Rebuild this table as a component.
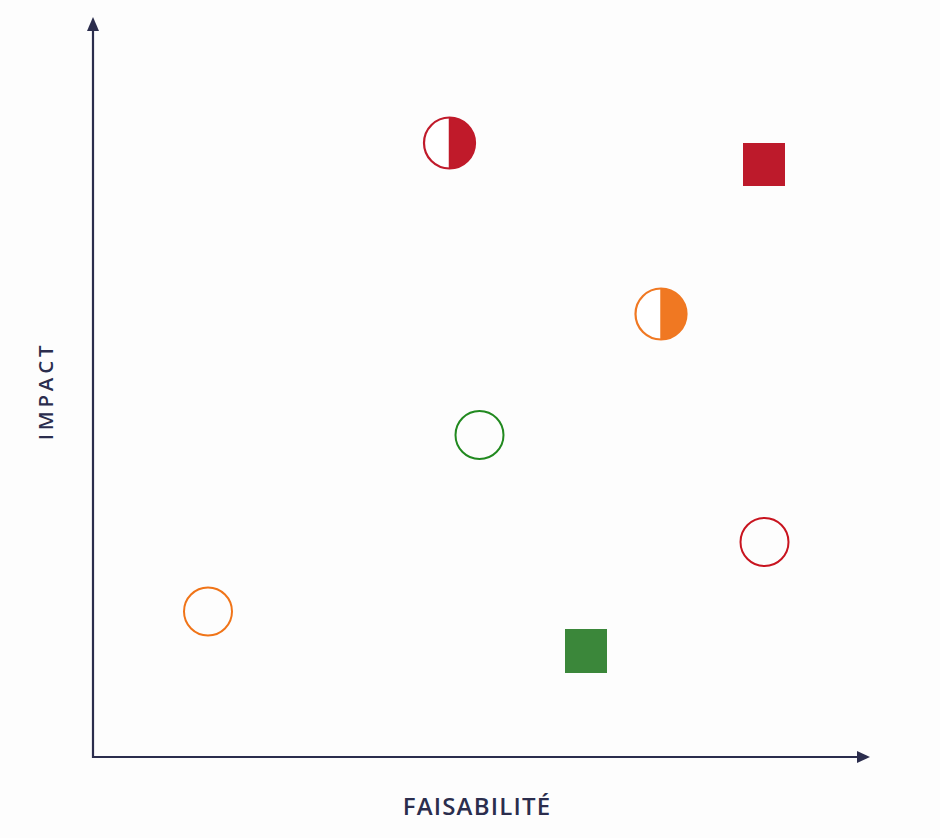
const AXIS = "#2b2d4d";

type Mark =
  | { kind: "circle"; cx: number; cy: number; r: number; color: string }
  | { kind: "half"; cx: number; cy: number; r: number; color: string }
  | { kind: "square"; x: number; y: number; w: number; h: number; color: string };

const marks: Mark[] = [
  { kind: "half", cx: 449.5, cy: 143, r: 25.5, color: "#c01a2a" },
  { kind: "square", x: 743, y: 143, w: 42, h: 43, color: "#bd1a2b" },
  { kind: "half", cx: 661, cy: 314, r: 25.5, color: "#f07822" },
  { kind: "circle", cx: 479.5, cy: 435, r: 24, color: "#21891f" },
  { kind: "circle", cx: 764.5, cy: 542, r: 24, color: "#c8141f" },
  { kind: "circle", cx: 208, cy: 611.5, r: 24, color: "#f07418" },
  { kind: "square", x: 565, y: 629, w: 42, h: 44, color: "#3b873a" },
];

function Marker({ m }: { m: Mark }) {
  if (m.kind === "square") {
    return <rect x={m.x} y={m.y} width={m.w} height={m.h} fill={m.color} />;
  }
  if (m.kind === "half") {
    return (
      <g>
        <circle cx={m.cx} cy={m.cy} r={m.r} fill="#fff" />
        <path
          d={`M ${m.cx} ${m.cy - m.r} A ${m.r} ${m.r} 0 0 1 ${m.cx} ${m.cy + m.r} Z`}
          fill={m.color}
        />
        <line x1={m.cx} y1={m.cy - m.r} x2={m.cx} y2={m.cy + m.r} stroke={m.color} strokeWidth={1.5} />
        <circle cx={m.cx} cy={m.cy} r={m.r} fill="none" stroke={m.color} strokeWidth={2.2} />
      </g>
    );
  }
  return <circle cx={m.cx} cy={m.cy} r={m.r} fill="none" stroke={m.color} strokeWidth={2} />;
}

export default function App() {
  return (
    <div className="w-[940px] h-[838px] bg-[#fdfdfd] overflow-hidden">
      <svg width={940} height={838} viewBox="0 0 940 838" className="block">
        {/* axes */}
        <line x1={93} y1={28} x2={93} y2={758} stroke={AXIS} strokeWidth={2.2} />
        <polygon points="93,17 87,31 99,31" fill={AXIS} />
        <line x1={92} y1={757} x2={860} y2={757} stroke={AXIS} strokeWidth={2.2} />
        <polygon points="870,757 857,751 857,763" fill={AXIS} />

        {marks.map((m, i) => (
          <Marker key={i} m={m} />
        ))}

        <text
          x={477}
          y={815}
          textAnchor="middle"
          fill={AXIS}
          fontFamily="'Open Sans', sans-serif"
          fontWeight={600}
          fontSize={24}
          letterSpacing={1.2}
        >
          FAISABILITÉ
        </text>
        <text
          transform="translate(52.5 391) rotate(-90)"
          textAnchor="middle"
          fill={AXIS}
          fontFamily="'Open Sans', sans-serif"
          fontWeight={600}
          fontSize={20.5}
          letterSpacing={3.8}
        >
          IMPACT
        </text>
      </svg>
    </div>
  );
}
